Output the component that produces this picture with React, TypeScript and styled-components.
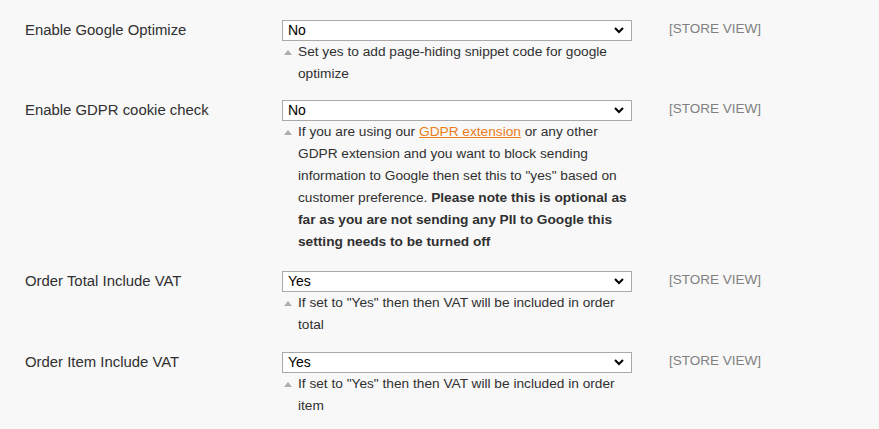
import React from 'react';
import styled, { createGlobalStyle } from 'styled-components';

const Global = createGlobalStyle`
  html, body {
    margin: 0;
    padding: 0;
    background: #f8f8f8;
    font-family: 'Liberation Sans', Arial, sans-serif;
    color: #303030;
  }
`

const Form = styled.div`
  padding: 20px 0 0 25px;
`

const Row = styled.div<{ $gap?: number }>`
  display: grid;
  grid-template-columns: 257px 350px auto;
  padding-bottom: ${p => p.$gap ?? 16}px;
`

const Label = styled.div`
  font-size: 14.9px;
  line-height: 21px;
  color: #303030;
`

const Value = styled.div`
  display: flex;
  flex-direction: column;
`

const SelectWrap = styled.div`
  position: relative;
  height: 21px;
`

const Select = styled.select`
  -webkit-appearance: none;
  appearance: none;
  box-sizing: border-box;
  width: 350px;
  height: 21px;
  margin: 0;
  padding: 0 24px 0 5px;
  border: 1px solid #a9a9a9;
  border-radius: 0;
  background: #ffffff;
  color: #000;
  font-family: 'Liberation Sans', Arial, sans-serif;
  font-size: 14px;
  line-height: 19px;
  &:focus {
    outline: none;
  }
`

const Chevron = styled.svg`
  position: absolute;
  right: 8px;
  top: 7px;
  pointer-events: none;
`

const Note = styled.div`
  position: relative;
  padding-left: 16px;
  font-size: 13.7px;
  line-height: 22px;
  color: #303030;
  &::before {
    content: '';
    position: absolute;
    left: 2px;
    top: 9px;
    border-left: 4px solid transparent;
    border-right: 4px solid transparent;
    border-bottom: 5px solid #adadad;
  }
  a {
    color: #eb7d1a;
    text-decoration: underline;
  }
  b {
    font-weight: 700;
  }
`

const Scope = styled.div`
  margin-left: 37px;
  font-size: 13.5px;
  line-height: 17px;
  color: #808080;
`

type FieldProps = {
  label: string;
  value: string;
  gap?: number;
  children: React.ReactNode;
}

function Field(props: FieldProps) {
  let { label, value, gap, children } = props;
  return (
    <Row $gap={gap}>
      <Label>{label}</Label>
      <Value>
        <SelectWrap>
          <Select defaultValue={value}>
            <option value="Yes">Yes</option>
            <option value="No">No</option>
          </Select>
          <Chevron width="10" height="7" viewBox="0 0 10 7">
            <polyline points="1,1 5,5 9,1" fill="none" stroke="#000" strokeWidth="2" />
          </Chevron>
        </SelectWrap>
        <Note>{children}</Note>
      </Value>
      <Scope>[STORE VIEW]</Scope>
    </Row>
  );
}

export default function App() {
  return (
    <Form>
      <Global />
      <Field label="Enable Google Optimize" value="No" gap={15}>
        Set yes to add page-hiding snippet code for google optimize
      </Field>
      <Field label="Enable GDPR cookie check" value="No" gap={18}>
        If you are using our <a href="#">GDPR extension</a> or any other GDPR extension and you want to block
        sending information to Google then set this to "yes" based on customer preference.{' '}
        <b>Please note this is optional as far as you are not sending any PII to Google this setting needs to be turned off</b>
      </Field>
      <Field label="Order Total Include VAT" value="Yes">
        If set to "Yes" then then VAT will be included in order total
      </Field>
      <Field label="Order Item Include VAT" value="Yes">
        If set to "Yes" then then VAT will be included in order item
      </Field>
    </Form>
  );
}
